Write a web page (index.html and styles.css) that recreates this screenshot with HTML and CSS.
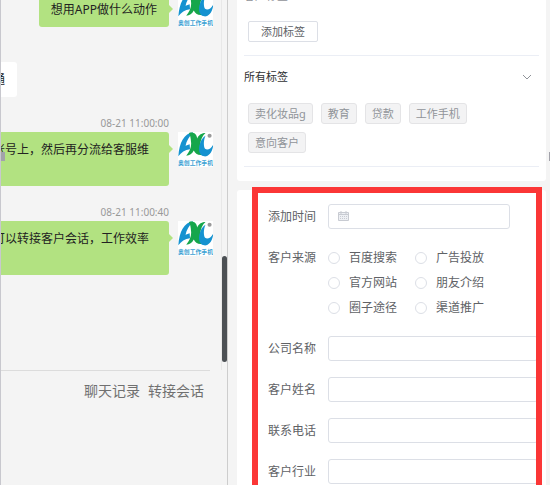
FILE: index.html
```html
<!DOCTYPE html>
<html lang="zh-CN">
<head>
  <meta charset="UTF-8" />
  <meta name="viewport" content="width=device-width, initial-scale=1.0" />
  <title>客户会话</title>
  <link rel="stylesheet" href="styles.css">
</head>
<body>
  <svg class="defs" width="0" height="0" aria-hidden="true">
    <symbol id="logo" viewBox="0 0 102 102">
      <path d="M1 71 C4 30 18 5 44 1 C33 13 25 26 22 40 L34 36 L35 50 C20 52 9 59 1 71Z" fill="#1592d0" />
      <path d="M32 3 C44 -1 54 5 56 19 C60 10 67 3 80 3 C71 11 66 23 65 36 C66 49 69 57 75 66 C60 70 50 64 46 54 C41 64 34 69 24 69 C34 57 40 43 38 29 C37 18 36 10 32 3Z" fill="#16a64b" />
      <path d="M80 11 C74 25 74 43 79 49 C86 55 96 49 103 36 C101 58 90 72 77 71 C62 70 57 50 65 31 C68 22 73 16 80 11Z" fill="#1592d0" />
      <circle cx="92" cy="11" r="6" fill="#999" />
      <text x="51" y="96" text-anchor="middle" class="logo-text">奥创工作手机</text>
    </symbol>
  </svg>

  <div class="app">
    <main class="chat">
      <div class="chat-log">
        <div class="messages">
          <div class="message">
            <time>08-21 10:58:20</time>
            <div class="message-row">
              <div class="bubble">想用APP做什么动作</div>
              <svg class="avatar"><use href="#logo" /></svg>
            </div>
          </div>
          <div class="message incoming">
            <time></time>
            <div class="message-row">
              <div class="bubble">通</div>
            </div>
          </div>
          <div class="message">
            <time>08-21 11:00:00</time>
            <div class="message-row">
              <div class="bubble">多个微信号引流到账号上，然后再分流给客服维护</div>
              <svg class="avatar"><use href="#logo" /></svg>
            </div>
          </div>
          <div class="message">
            <time>08-21 11:00:40</time>
            <div class="message-row">
              <div class="bubble">客服之间互相配合可以转接客户会话，工作效率更高</div>
              <svg class="avatar"><use href="#logo" /></svg>
            </div>
          </div>
        </div>
        <div class="scroll-track"><div class="scroll-thumb"></div></div>
      </div>
      <div class="composer">
        <button type="button">聊天记录</button>
        <button type="button">转接会话</button>
      </div>
      <span class="handle"></span>
    </main>

    <aside class="sidebar">
      <section class="card tags-card">
        <h2>客户标签</h2>
        <button type="button" class="add-tag">添加标签</button>
        <div class="tags-head">
          <h2>所有标签</h2>
          <svg width="10" height="6" viewBox="0 0 10 6" fill="none" stroke="#909399"><path d="M1 1l4 4 4-4" /></svg>
        </div>
        <div class="tags">
          <span class="tag">卖化妆品g</span>
          <span class="tag">教育</span>
          <span class="tag">贷款</span>
          <span class="tag">工作手机</span>
          <span class="tag">意向客户</span>
        </div>
      </section>

      <section class="card form-card">
        <form>
          <div class="field">
            <label for="added">添加时间</label>
            <div class="date-box">
              <svg width="11" height="11" viewBox="0 0 11 11" fill="none" stroke="#c8cbd2">
                <path d="M.5 1.5h10v8H.5z" fill="#eef0f4" />
                <path d="M.5 3.5h10M3 0v3M8 0v3" />
                <path d="M2 5.500h7M2 7.500h7" stroke-dasharray="1 1" />
              </svg>
              <input type="text" id="added">
            </div>
          </div>
          <div class="field" role="radiogroup" aria-labelledby="source">
            <span class="field-name" id="source">客户来源</span>
            <div class="radios">
              <label><input type="radio" name="source"> 百度搜索</label>
              <label><input type="radio" name="source"> 广告投放</label>
              <label><input type="radio" name="source"> 官方网站</label>
              <label><input type="radio" name="source"> 朋友介绍</label>
              <label><input type="radio" name="source"> 圈子途径</label>
              <label><input type="radio" name="source"> 渠道推广</label>
            </div>
          </div>
          <div class="field">
            <label for="company">公司名称</label>
            <input type="text" id="company">
          </div>
          <div class="field">
            <label for="name">客户姓名</label>
            <input type="text" id="name">
          </div>
          <div class="field">
            <label for="phone">联系电话</label>
            <input type="text" id="phone">
          </div>
          <div class="field">
            <label for="industry">客户行业</label>
            <input type="text" id="industry">
          </div>
        </form>
        <div class="highlight"></div>
      </section>
      <span class="handle handle-right"></span>
    </aside>
  </div>
</body>
</html>
```

FILE: styles.css
```css
* {
  box-sizing: border-box;
}
body {
  margin: 0;
  background-color: #f4f4f4;
  color: #606266;
  font-family: "Noto Sans", "Noto Sans CJK SC", sans-serif;
  font-size: 12px;
}
button, input {
  font-family: inherit;
  margin: 0;
}
h2 {
  margin: 0;
  font-size: 11px;
  font-weight: 400;
  line-height: 16px;
  color: #303133;
}
.defs {
  position: absolute;
}
.logo-text {
  font-size: 17px;
  font-weight: 700;
  fill: #3a9fd3;
}
.app {
  display: flex;
  height: 100vh;
  overflow: hidden;
}

/* chat */
.chat {
  position: relative;
  display: flex;
  flex-direction: column;
  flex: 0 0 228px;
  border-left: 1px solid #c8c8ce;
  border-right: 1px solid #cdcdcd;
  overflow: hidden;
}
.chat-log {
  display: flex;
  flex: 1;
  min-height: 0;
}
.messages {
  display: flex;
  flex-direction: column;
  flex: 1;
  min-width: 0;
  gap: 19px;
  margin-top: -24px;
  padding-right: 8px;
}
.message time {
  display: block;
  height: 14px;
  margin: 0 44px 2px 0;
  font-size: 10px;
  line-height: 14px;
  text-align: right;
  color: #999;
}
.message-row {
  display: flex;
  justify-content: flex-end;
  align-items: flex-start;
  gap: 9px;
}
.bubble {
  position: relative;
  flex-shrink: 0;
  max-width: 284px;
  padding: 8px 12px;
  border-radius: 3px;
  background-color: #b2e281;
  color: #222;
  line-height: 19px;
}
.bubble::after {
  content: "";
  position: absolute;
  top: 13px;
  left: 100%;
  border: 4px solid transparent;
  border-left-color: #b2e281;
  border-right-width: 0;
}
.incoming .message-row {
  justify-content: flex-start;
  margin-left: -20px;
}
.incoming .bubble {
  background-color: #fff;
}
.incoming .bubble::after {
  display: none;
}
.avatar {
  flex-shrink: 0;
  width: 35px;
  height: 35px;
  background-color: #fff;
}
.scroll-track {
  width: 6px;
  padding-top: 256px;
  border-left: 1px solid #e8e8e8;
}
.scroll-thumb {
  width: 5px;
  height: 106px;
  border-radius: 3px;
  background-color: #4c5054;
}
.composer {
  display: flex;
  justify-content: flex-end;
  align-items: flex-start;
  gap: 8px;
  height: 115px;
  margin-right: 17px;
  padding: 10px 6px 0 0;
  border-top: 1px solid #dcdcdc;
}
.composer button {
  padding: 0;
  border: 0;
  background: none;
  font-size: 14px;
  line-height: 20px;
  color: #707070;
}
.handle {
  position: absolute;
  top: 152px;
  left: -1px;
  width: 5px;
  height: 9px;
  background-color: #a2a2aa;
}
.handle-right {
  left: auto;
  right: 0;
  width: 1px;
}

/* sidebar */
.sidebar {
  position: relative;
  display: flex;
  flex-direction: column;
  flex: 1;
  gap: 9px;
  min-width: 0;
  padding: 0 4px 0 9px;
}
.card {
  border-radius: 3px;
  background-color: #fff;
}
.tags-card {
  margin-top: -12px;
  padding: 0 7px 14px;
}
.tags-card > h2 {
  color: #909399;
}
.add-tag {
  display: block;
  width: 70px;
  height: 21px;
  margin: 17px 4px 13px;
  padding: 0;
  border: 1px solid #dcdfe6;
  border-radius: 2px;
  background-color: #fff;
  font-size: 11px;
  line-height: 16px;
  color: #606266;
}
.tags-head {
  display: flex;
  justify-content: space-between;
  align-items: center;
  padding: 13px 7px 18px 0;
  border-top: 1px solid #ebeef5;
}
.tags {
  display: flex;
  flex-wrap: wrap;
  gap: 8px;
  padding: 0 18px 13px 4px;
  border-bottom: 1px solid #ebeef5;
}
.tag {
  height: 21px;
  padding: 0 6px;
  border: 1px solid #e4e4e6;
  border-radius: 3px;
  background-color: #f3f3f4;
  font-size: 11px;
  line-height: 19px;
  color: #909399;
}
.form-card {
  position: relative;
  flex: 1 0 auto;
  padding: 14px 8px 16px 31px;
}
form {
  display: flex;
  flex-direction: column;
  gap: 16px;
}
.field {
  display: flex;
  align-items: flex-start;
  gap: 12px;
  line-height: 25px;
}
.field > label, .field-name {
  flex: 0 0 48px;
}
.field > input, .date-box {
  flex: 1;
  min-width: 0;
  height: 25px;
  border: 1px solid #dcdfe6;
  border-radius: 3px;
  background-color: #fff;
}
.date-box {
  display: flex;
  align-items: center;
  gap: 6px;
  margin-right: 28px;
  padding: 0 9px;
}
.date-box input {
  flex: 1;
  min-width: 0;
  border: 0;
  padding: 0;
}
.radios {
  display: grid;
  grid-template-columns: auto auto;
  column-gap: 18px;
}
.radios label {
  display: flex;
  align-items: center;
  gap: 9px;
}
.radios input {
  appearance: none;
  width: 12px;
  height: 12px;
  border: 1px solid #dcdfe6;
  border-radius: 50%;
  background-color: #fff;
}
.highlight {
  position: absolute;
  top: -3px;
  right: 4px;
  bottom: -12px;
  left: 15px;
  border: 6px solid #fb3636;
  pointer-events: none;
}
```
